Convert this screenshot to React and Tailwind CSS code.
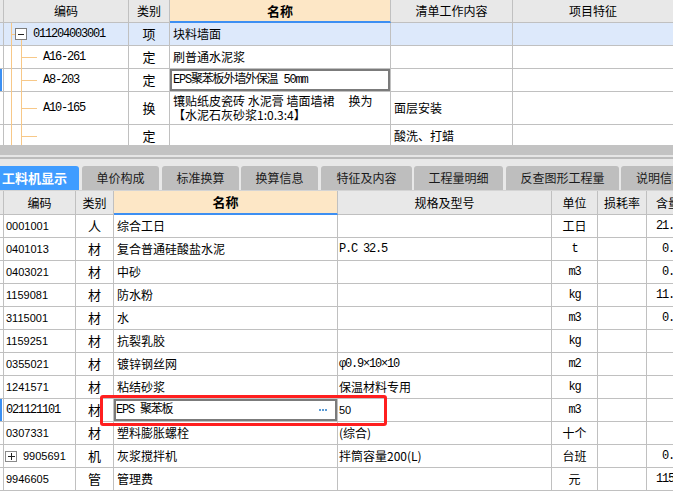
import React from "react";

const line = "border-[#c0c0c0]";
const cjk = "font-['Noto_Sans_CJK_SC',sans-serif]";
const mono = "font-['Liberation_Mono','Noto_Sans_CJK_SC',monospace] tracking-[-1.2px] text-[12px]";
const sans = "font-['Liberation_Sans','Noto_Sans_CJK_SC',sans-serif] text-[11px]";
const tree = "bg-[#f7c888]";

const topRows = [
  { code: "011204003001", type: "项", name: "块料墙面", level: 0, h: "h-[23px]", bg: "bg-[#dde9fb]" },
  { code: "A16-261", type: "定", name: "刷普通水泥浆", h: "h-[23px]" },
  { code: "A8-203", type: "定", name: "EPS聚苯板外墙外保温 50mm", h: "h-[23px]", edit: true, marker: true },
  {
    code: "A10-165",
    type: "换",
    name: ["镶贴纸皮瓷砖 水泥膏 墙面墙裙", "换为", "【水泥石灰砂浆1:0.3:4】"],
    content: "面层安装",
    h: "h-[33px]",
  },
  { code: "", type: "定", name: "", content: "酸洗、打蜡", h: "h-[23px]" },
];

const rows = [
  { code: "0001001", type: "人", name: "综合工日", unit: "工日", qty: "21.853" },
  { code: "0401013", type: "材", name: "复合普通硅酸盐水泥", spec: "P.C 32.5", specFont: mono, unit: "t", qty: "0.289" },
  { code: "0403021", type: "材", name: "中砂", unit: "m3", qty: "0.036" },
  { code: "1159081", type: "材", name: "防水粉", unit: "kg", qty: "11.550" },
  { code: "3115001", type: "材", name: "水", unit: "m3", qty: "0.059" },
  { code: "1159251", type: "材", name: "抗裂乳胶", unit: "kg" },
  { code: "0355021", type: "材", name: "镀锌钢丝网", spec: "φ0.9×10×10", specFont: mono, unit: "m2" },
  { code: "1241571", type: "材", name: "粘结砂浆", spec: "保温材料专用", unit: "kg" },
  { code: "021121101", type: "材", name: "EPS 聚苯板", spec: "50", specFont: sans, unit: "m3", edit: true },
  { code: "0307331", type: "材", name: "塑料膨胀螺栓", spec: "(综合)", unit: "十个" },
  { code: "9905691", type: "机", name: "灰浆搅拌机", spec: "拌筒容量200(L)", unit: "台班", qty: "0.016", plus: true },
  { code: "9946605", type: "管", name: "管理费", unit: "元", qty: "115.00" },
];

const tabs = [
  { label: "工料机显示", w: "w-[89px] -ml-[10px]", active: true },
  { label: "单价构成", w: "w-[77px] ml-[3px]" },
  { label: "标准换算", w: "w-[77px] ml-[3px]" },
  { label: "换算信息", w: "w-[77px] ml-[2px]" },
  { label: "特征及内容", w: "w-[91px] ml-[3px]" },
  { label: "工程量明细", w: "w-[89px] ml-[2px]" },
  { label: "反查图形工程量", w: "w-[113px] ml-[3px]" },
  { label: "说明信息", w: "w-[78px] ml-[2px]" },
];

const isAscii = (s) => /^[\x00-\x7f]+$/.test(s);

const Cell = ({ w, className = "", children }) => (
  <div className={`${w} shrink-0 flex items-center border-r border-b ${line} ${className}`}>{children}</div>
);

const Gutter = ({ marker }) => (
  <div className={`w-[4px] shrink-0 border-r border-b ${line} flex`}>
    {marker && <div className="w-[2px] bg-[#3b8ff2]" />}
  </div>
);

const TreeCode = ({ row }) => (
  <div className={`relative w-[125px] shrink-0 flex items-center border-r border-b ${line} ${mono}`}>
    <div className={`absolute left-[7px] top-0 -bottom-px w-px ${tree}`} />
    {row.level === 0 ? (
      <>
        <div className={`absolute left-[8px] top-1/2 w-[3px] h-px ${tree}`} />
        <div className={`absolute left-[17px] top-[16px] -bottom-px w-px ${tree}`} />
        <div className="absolute left-[11px] top-1/2 -translate-y-1/2 w-[12px] h-[12px] border border-[#7d7d7d] bg-white flex items-center justify-center">
          <div className="w-[6px] h-px bg-[#222]" />
        </div>
        <span className="pl-[29px]">{row.code}</span>
      </>
    ) : (
      <>
        <div className={`absolute left-[17px] top-0 -bottom-px w-px ${tree}`} />
        <div className={`absolute left-[17px] top-1/2 w-[16px] h-px ${tree}`} />
        <span className="pl-[39px]">{row.code}</span>
      </>
    )}
  </div>
);

const TopTable = () => (
  <div className="h-[145px] overflow-hidden">
    <div className="flex h-[23px] bg-[#e8e8e8] text-[12px]">
      <Gutter />
      <Cell w="w-[125px]" className="justify-center">编码</Cell>
      <Cell w="w-[41px]" className="justify-center">类别</Cell>
      <div className="w-[221px] shrink-0 flex items-center justify-center bg-[#fde7c6] border-r border-[#c0c0c0] border-b-2 border-b-[#3d8ff2] font-bold text-[13px]">
        名称
      </div>
      <Cell w="w-[122px]" className="justify-center">清单工作内容</Cell>
      <Cell w="w-[160px]" className="justify-center border-r-0">项目特征</Cell>
    </div>
    {topRows.map((r, i) => (
      <div key={i} className={`flex ${r.h} ${r.bg || "bg-white"}`}>
        <Gutter marker={r.marker} />
        <TreeCode row={r} />
        <Cell w="w-[41px]" className="justify-center text-[13px]">{r.type}</Cell>
        {r.edit ? (
          <Cell w="w-[221px]" className={`pl-[3px] shadow-[inset_0_0_0_2px_#7b7b7b] ${mono}`}>
            {r.name}
          </Cell>
        ) : Array.isArray(r.name) ? (
          <Cell w="w-[221px]" className="pl-[3px] text-[12px] leading-[14px]">
            <div className="whitespace-nowrap">
              <div>
                {r.name[0]}
                <span className="ml-[14px]">{r.name[1]}</span>
              </div>
              <div>{r.name[2]}</div>
            </div>
          </Cell>
        ) : (
          <Cell w="w-[221px]" className="pl-[3px] text-[12px]">{r.name}</Cell>
        )}
        <Cell w="w-[122px]" className="pl-[3px] text-[12px]">{r.content}</Cell>
        <Cell w="w-[160px]" className="border-r-0" />
      </div>
    ))}
  </div>
);

const Splitter = () => (
  <div>
    <div className="h-[10px] bg-[#c3c3c3]" />
    <div className="h-[2px] bg-[#e6e6e6]" />
    <div className="h-[2px] bg-[#bcbcbc]" />
    <div className="h-[7px] bg-[#e8e8e8]" />
  </div>
);

const Tabs = () => (
  <div className="flex h-[24px] bg-[#e8e8e8] overflow-hidden">
    {tabs.map((t) => (
      <div
        key={t.label}
        className={`${t.w} shrink-0 h-full rounded-t-[3px] flex items-center justify-center whitespace-nowrap ${
          t.active ? "bg-[#3f9cff] text-white font-bold text-[13px]" : "bg-[#bebebe] text-[#1a1a1a] text-[12px]"
        }`}
      >
        {t.label}
      </div>
    ))}
  </div>
);

const Dots = () => (
  <div className="flex gap-[1px] mr-[10px]">
    <div className="w-[2px] h-[2px] bg-[#5b9bd5]" />
    <div className="w-[2px] h-[2px] bg-[#5b9bd5]" />
    <div className="w-[2px] h-[2px] bg-[#5b9bd5]" />
  </div>
);

const BottomTable = () => (
  <div>
    <div className="h-px bg-[#d4d4d4]" />
    <div className="flex h-[24px] bg-[#e8e8e8] text-[12px]">
      <Gutter />
      <Cell w="w-[72px]" className="justify-center">编码</Cell>
      <Cell w="w-[38px]" className="justify-center">类别</Cell>
      <div className="w-[224px] shrink-0 flex items-center justify-center bg-[#fde7c6] border-r border-[#c0c0c0] border-b-2 border-b-[#3d8ff2] font-bold text-[13px]">
        名称
      </div>
      <Cell w="w-[214px]" className="justify-center">规格及型号</Cell>
      <Cell w="w-[46px]" className="justify-center">单位</Cell>
      <Cell w="w-[49px]" className="justify-center">损耗率</Cell>
      <Cell w="w-[60px]" className="pl-[9px]">含量</Cell>
    </div>
    {rows.map((r) => (
      <div key={r.code} className="flex h-[23px] bg-white">
        <Gutter marker={r.edit} />
        <Cell w="w-[72px]" className={`pl-[1px] ${r.edit ? mono : sans}`}>
          {r.plus && (
            <div className="w-[12px] h-[11px] mr-[6px] border border-[#8a8a8a] flex items-center justify-center relative">
              <div className="w-[7px] h-px bg-[#222]" />
              <div className="absolute w-px h-[7px] bg-[#222]" />
            </div>
          )}
          <span className={r.plus ? "" : "pl-[1px]"}>{r.code}</span>
        </Cell>
        <Cell w="w-[38px]" className="justify-center text-[13px]">{r.type}</Cell>
        {r.edit ? (
          <Cell w="w-[224px]" className={`pl-[2px] justify-between shadow-[inset_0_0_0_2px_#7b7b7b] ${mono}`}>
            <span>{r.name}</span>
            <Dots />
          </Cell>
        ) : (
          <Cell w="w-[224px]" className="pl-[3px] text-[12px]">{r.name}</Cell>
        )}
        <Cell w="w-[214px]" className={`pl-[1px] ${r.specFont || "text-[12px]"}`}>
          {r.spec}
        </Cell>
        <Cell w="w-[46px]" className={`justify-center ${isAscii(r.unit) ? mono : "text-[12px]"}`}>
          {r.unit}
        </Cell>
        <Cell w="w-[49px]" />
        <Cell w="w-[60px]" className={`justify-end pr-[14px] ${mono}`}>{r.qty}</Cell>
      </div>
    ))}
  </div>
);

export default function App() {
  return (
    <div className={`relative w-[673px] h-[491px] overflow-hidden bg-white text-black ${cjk}`}>
      <TopTable />
      <Splitter />
      <Tabs />
      <BottomTable />
      <div className="absolute left-[100px] top-[395px] w-[287px] h-[31px] border-[3px] border-[#ff1f1f] rounded-[3px] pointer-events-none" />
    </div>
  );
}
